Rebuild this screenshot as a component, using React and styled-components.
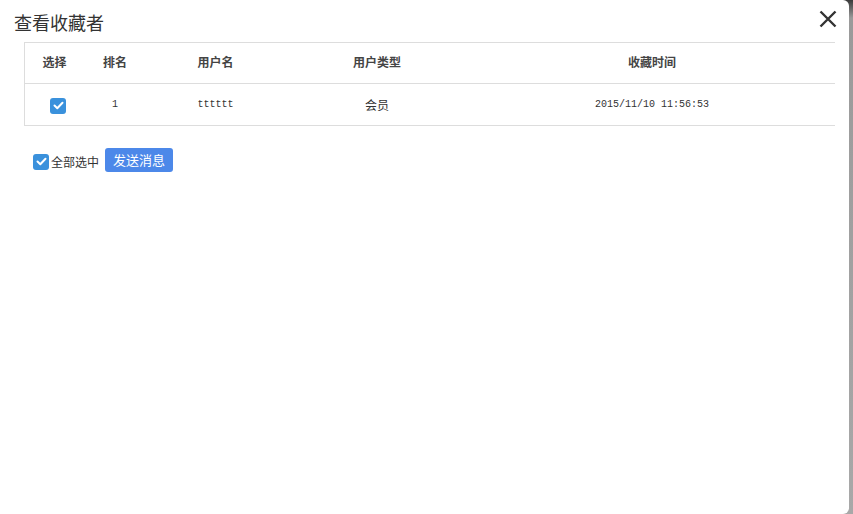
import React, { useState } from 'react';
import styled, { createGlobalStyle } from 'styled-components';

const GlobalStyle = createGlobalStyle`
  html, body {
    margin: 0;
    padding: 0;
    background: #8c8c8c;
    font-family: "Noto Sans CJK SC", "Liberation Sans", sans-serif;
  }
`;

const Page = styled.div`
  width: 853px;
  height: 514px;
  display: flex;
  background: linear-gradient(to bottom, #3a3a3a 0, #9a9a9a 18px, #a8a8a8 100%);
`;

const Dialog = styled.div`
  width: 849px;
  height: 514px;
  background: #fff;
  border-radius: 0 6px 6px 0;
  box-sizing: border-box;
  padding: 8px 0 0 14px;
`;

const Header = styled.div`
  display: flex;
  justify-content: space-between;
  align-items: flex-start;
  height: 34px;
`;

const Title = styled.h3`
  margin: 0;
  font-size: 18px;
  font-weight: 400;
  line-height: 28px;
  color: #333;
`;

const CloseButton = styled.button`
  border: none;
  background: none;
  padding: 0;
  margin: 0 10px 0 0;
  width: 22px;
  height: 22px;
  cursor: pointer;
  display: flex;
  align-items: center;
  justify-content: center;
`;

const TableWrap = styled.div`
  margin-left: 10px;
  width: 810px;
  border-left: 1px solid #ddd;
`;

const Table = styled.table`
  width: 100%;
  border-collapse: collapse;
  table-layout: fixed;
  font-size: 12px;
  color: #333;
`;

const Th = styled.th`
  width: ${p => p.w}px;
  height: 40px;
  padding: 0;
  font-weight: 700;
  line-height: 16px;
  text-align: center;
  color: #444;
  border-top: 1px solid #ddd;
  border-bottom: 1px solid #ddd;
`;

const HeadLabel = styled.span`
  position: relative;
  top: -1px;
`;

const Td = styled.td`
  height: 41px;
  padding: 0;
  text-align: center;
  border-bottom: 1px solid #ddd;
  font-family: ${p => (p.mono ? '"Liberation Mono", "DejaVu Sans Mono", monospace' : 'inherit')};
  font-size: ${p => (p.mono ? '10px' : '12px')};
  color: #333;
`;

const CheckBox = styled.span`
  display: inline-flex;
  align-items: center;
  justify-content: center;
  width: 16px;
  height: 16px;
  border-radius: 3px;
  background: ${p => (p.checked ? '#3a91dc' : '#fff')};
  border: ${p => (p.checked ? 'none' : '1px solid #bbb')};
  vertical-align: middle;
  cursor: pointer;
`;

const RowCheck = styled.span`
  display: inline-block;
  margin-left: 7px;
`;

const Footer = styled.div`
  display: flex;
  align-items: center;
  margin: 22px 0 0 19px;
`;

const SelectAll = styled.label`
  display: flex;
  align-items: center;
  gap: 2px;
  font-size: 12px;
  color: #333;
  margin-top: 3px;
  cursor: pointer;
`;

const SendButton = styled.button`
  margin-left: 6px;
  height: 24px;
  padding: 0 8px;
  border: none;
  border-radius: 3px;
  background: #4c88e9;
  color: #fff;
  font-family: inherit;
  font-size: 13px;
  line-height: 24px;
  cursor: pointer;
`;

const Tick = () => (
  <svg width="11" height="9" viewBox="0 0 11 9">
    <path d="M1.5 4.5 L4.3 7.2 L9.5 1.8" fill="none" stroke="#fff" strokeWidth="2" strokeLinecap="round" strokeLinejoin="round" />
  </svg>
);

const Check = ({ checked, onClick }) => (
  <CheckBox checked={checked} onClick={onClick}>
    {checked && <Tick />}
  </CheckBox>
);

const columns = [
  { label: '选择', w: 59 },
  { label: '排名', w: 62 },
  { label: '用户名', w: 139 },
  { label: '用户类型', w: 184 },
  { label: '收藏时间' },
];

const rows = [
  { rank: '1', name: 'tttttt', type: '会员', time: '2015/11/10 11:56:53' },
];

const App = () => {
  const [checked, setChecked] = useState(true);

  return (
    <Page>
      <GlobalStyle />
      <Dialog>
        <Header>
          <Title>查看收藏者</Title>
          <CloseButton>
            <svg width="18" height="18" viewBox="0 0 18 18">
              <path d="M1.5 1.5 L16.5 16.5 M16.5 1.5 L1.5 16.5" stroke="#333" strokeWidth="2.4" />
            </svg>
          </CloseButton>
        </Header>
        <TableWrap>
          <Table>
            <thead>
              <tr>
                {columns.map(c => (
                  <Th key={c.label} w={c.w}><HeadLabel>{c.label}</HeadLabel></Th>
                ))}
              </tr>
            </thead>
            <tbody>
              {rows.map(r => (
                <tr key={r.rank}>
                  <Td>
                    <RowCheck>
                      <Check checked={checked} onClick={() => setChecked(!checked)} />
                    </RowCheck>
                  </Td>
                  <Td mono>{r.rank}</Td>
                  <Td mono>{r.name}</Td>
                  <Td>{r.type}</Td>
                  <Td mono>{r.time}</Td>
                </tr>
              ))}
            </tbody>
          </Table>
        </TableWrap>
        <Footer>
          <SelectAll onClick={() => setChecked(!checked)}>
            <Check checked={checked} />
            全部选中
          </SelectAll>
          <SendButton>发送消息</SendButton>
        </Footer>
      </Dialog>
    </Page>
  );
};

export default App;
